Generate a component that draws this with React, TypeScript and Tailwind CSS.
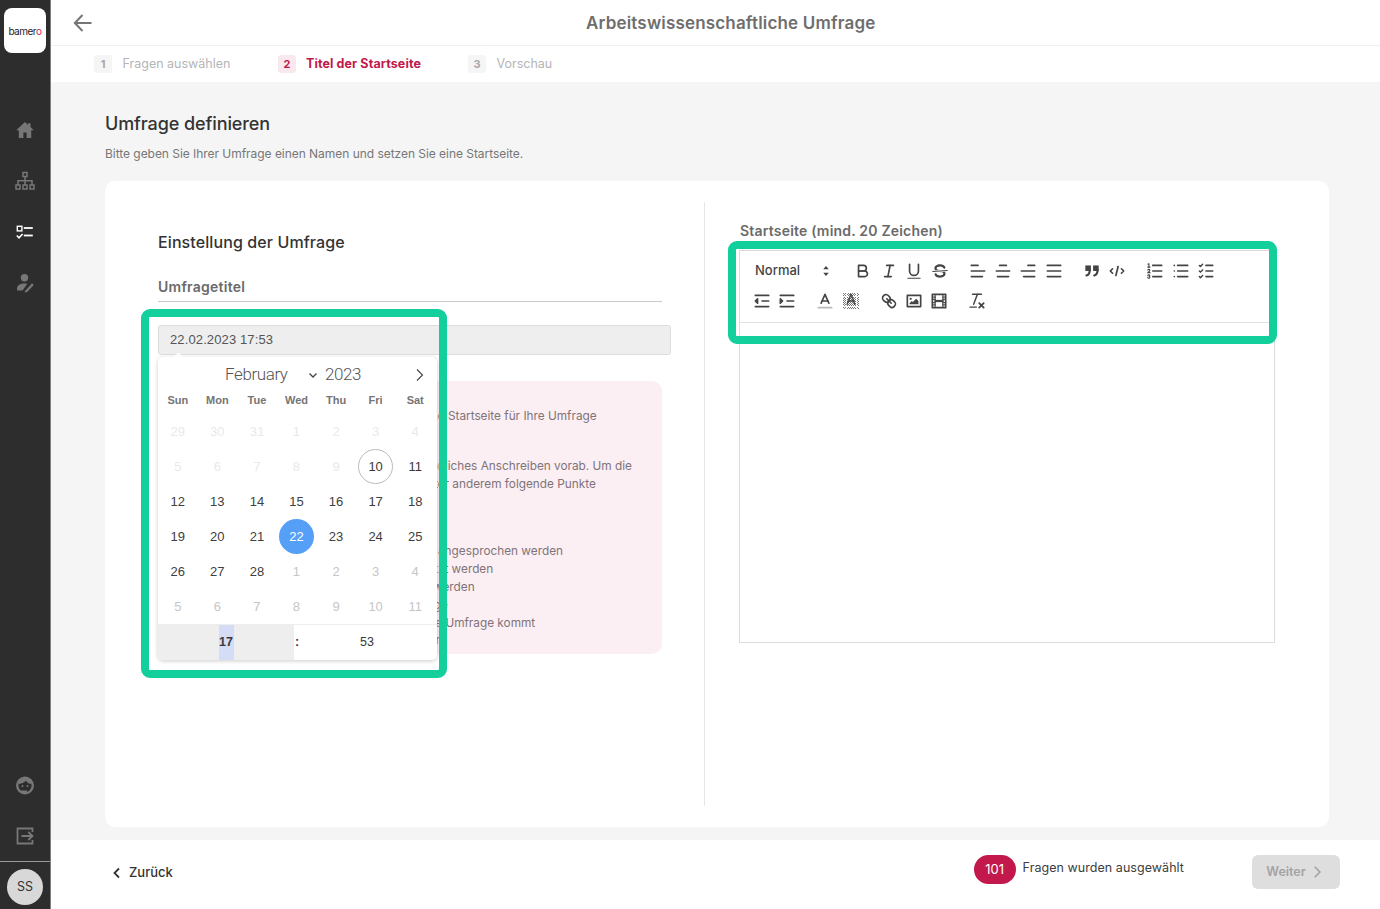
import React from "react";

const S = "#444";
const st = { stroke: S, strokeWidth: 1.5, fill: "none", strokeLinecap: "round" as const, strokeLinejoin: "round" as const };
const th = { ...st, strokeWidth: 1 };
const f = { fill: S };

const Q = ({ children }: { children: React.ReactNode }) => (
  <span className="flex h-6 w-[25.4px] items-center justify-center">
    <svg viewBox="0 0 18 18" className="h-5 w-5 shrink-0">{children}</svg>
  </span>
);
const L = ({ x1, x2, y }: { x1: number; x2: number; y: number }) => <line x1={x1} x2={x2} y1={y} y2={y} {...st} />;

const hatch = [] as React.ReactNode[];
for (let y = 2; y < 16; y++) for (let x = 2; x < 16; x++) if ((x + y) % 2 === 0) hatch.push(<rect key={x + "-" + y} x={x} y={y} width="0.9" height="0.9" fill="#777" shapeRendering="crispEdges" />);

function Toolbar() {
  return (
    <div className="flex flex-wrap gap-x-[12.7px] gap-y-[6px] border-b border-[#e2e2e2] pl-[9px] pr-2 pt-[8px] pb-[9px]">
      <div className="flex h-6 w-[89px] items-center justify-between pl-[6px] pr-[2px] text-[13px] font-medium text-[#444]">
        <span>Normal</span>
        <svg viewBox="0 0 18 18" className="h-5 w-5"><polygon points="6.5 7.5 9 4.5 11.5 7.5" fill={S} /><polygon points="6.5 10.5 9 13.5 11.5 10.5" fill={S} /></svg>
      </div>
      <div className="flex">
        <Q><path d="M5,4H9.5A2.5,2.5,0,0,1,12,6.5v0A2.5,2.5,0,0,1,9.5,9H5A0,0,0,0,1,5,9V4A0,0,0,0,1,5,4Z" {...st} /><path d="M5,9h5.5A2.5,2.5,0,0,1,13,11.5v0A2.5,2.5,0,0,1,10.5,14H5a0,0,0,0,1,0,0V9A0,0,0,0,1,5,9Z" {...st} /></Q>
        <Q><L x1={7} x2={13} y={4} /><L x1={5} x2={11} y={14} /><line x1="8" x2="10" y1="14" y2="4" {...st} /></Q>
        <Q><path d="M5,3V9a4.012,4.012,0,0,0,4,4H9a4.012,4.012,0,0,0,4-4V3" {...st} /><rect height="1" rx=".5" ry=".5" width="12" x="3" y="15" {...f} /></Q>
        <Q><line x1="15.5" x2="2.5" y1="8.5" y2="9.5" {...th} /><path d="M9.007,8C6.542,7.791,6,7.519,6,6.5,6,5.792,7.283,5,9,5c1.571,0,2.765.679,2.969,1.309a1,1,0,0,0,1.9-.617C13.356,4.106,11.354,3,9,3,6.2,3,4,4.538,4,6.5a3.2,3.2,0,0,0,.5,1.843Z" {...f} /><path d="M8.984,10C11.457,10.208,12,10.479,12,11.5c0,.708-1.283,1.5-3,1.5-1.571,0-2.765-.679-2.969-1.309a1,1,0,1,0-1.9.617C4.644,13.894,6.646,15,9,15c2.8,0,5-1.538,5-3.5a3.2,3.2,0,0,0-.5-1.843Z" {...f} /></Q>
      </div>
      <div className="flex">
        <Q><L x1={3} x2={15} y={9} /><L x1={3} x2={13} y={14} /><L x1={3} x2={9} y={4} /></Q>
        <Q><L x1={15} x2={3} y={9} /><L x1={14} x2={4} y={14} /><L x1={12} x2={6} y={4} /></Q>
        <Q><L x1={15} x2={3} y={9} /><L x1={15} x2={5} y={14} /><L x1={15} x2={9} y={4} /></Q>
        <Q><L x1={15} x2={3} y={9} /><L x1={15} x2={3} y={14} /><L x1={15} x2={3} y={4} /></Q>
      </div>
      <div className="flex">
        <Q><rect height="3" width="3" x="4" y="5" fill={S} stroke={S} strokeWidth="2" /><rect height="3" width="3" x="11" y="5" fill={S} stroke={S} strokeWidth="2" /><path d="M7,8c0,4.031-3,5-3,5" {...st} strokeWidth={2} /><path d="M14,8c0,4.031-3,5-3,5" {...st} strokeWidth={2} /></Q>
        <Q><polyline points="5 7 3 9 5 11" {...st} /><polyline points="13 7 15 9 13 11" {...st} /><line x1="10" x2="8" y1="5" y2="13" {...st} /></Q>
      </div>
      <div className="flex">
        <Q><L x1={7} x2={15} y={4} /><L x1={7} x2={15} y={9} /><L x1={7} x2={15} y={14} /><line x1="2.5" x2="4.5" y1="5.5" y2="5.5" {...th} /><path d="M3.5,6A0.5,0.5,0,0,1,3,5.5V3.085l-0.276.138A0.5,0.5,0,0,1,2.053,3c-0.124-.247-0.023-0.324.224-0.447l1-.5A0.5,0.5,0,0,1,4,2.5v3A0.5,0.5,0,0,1,3.5,6Z" {...f} /><path d="M4.5,10.5h-2c0-.234,1.85-1.076,1.85-2.234A0.959,0.959,0,0,0,2.5,8.156" {...th} /><path d="M2.5,14.846a0.959,0.959,0,0,0,1.85-.109A0.7,0.7,0,0,0,3.75,14a0.688,0.688,0,0,0,.6-0.736,0.959,0.959,0,0,0-1.85-.109" {...th} /></Q>
        <Q><L x1={6} x2={15} y={4} /><L x1={6} x2={15} y={9} /><L x1={6} x2={15} y={14} /><L x1={3} x2={3} y={4} /><L x1={3} x2={3} y={9} /><L x1={3} x2={3} y={14} /></Q>
        <Q><L x1={9} x2={15} y={4} /><polyline points="3 4 4 5 6 3" {...th} strokeWidth={1.3} /><L x1={9} x2={15} y={14} /><polyline points="3 14 4 15 6 13" {...th} strokeWidth={1.3} /><L x1={9} x2={15} y={9} /><polyline points="3 9 4 10 6 8" {...th} strokeWidth={1.3} /></Q>
      </div>
      <div className="flex">
        <Q><L x1={3} x2={15} y={14} /><L x1={3} x2={15} y={4} /><L x1={9} x2={15} y={9} /><polyline points="5 7 5 11 3 9 5 7" {...st} fill={S} /></Q>
        <Q><L x1={3} x2={15} y={14} /><L x1={3} x2={15} y={4} /><L x1={9} x2={15} y={9} /><polyline points="3 7 3 11 5 9 3 7" {...st} fill={S} /></Q>
      </div>
      <div className="flex">
        <Q><line x1="3" x2="15" y1="15" y2="15" {...st} stroke="#bbb" /><polyline points="5.5 11 9 3 12.5 11" {...st} /><line x1="11.63" x2="6.38" y1="9" y2="9" {...st} /></Q>
        <Q>{hatch}<polyline points="5.5 12 9 3 12.5 12" {...th} strokeWidth={1.3} /><line x1="11.63" x2="6.38" y1="9" y2="9" {...th} strokeWidth={1.3} /></Q>
      </div>
      <div className="flex">
        <Q><line x1="7" x2="11" y1="7" y2="11" {...st} /><path d="M8.9,4.577a3.476,3.476,0,0,1,.36,4.679A3.476,3.476,0,0,1,4.577,8.9C3.185,7.5,2.035,6.4,4.217,4.217S7.5,3.185,8.9,4.577Z" {...st} /><path d="M13.423,9.1a3.476,3.476,0,0,0-4.679-.36,3.476,3.476,0,0,0,.36,4.679c1.392,1.392,2.5,2.542,4.679.36S14.815,10.5,13.423,9.1Z" {...st} /></Q>
        <Q><rect height="10" width="12" x="3" y="4" {...st} /><circle cx="6" cy="7" r="1" {...f} /><polyline points="5 12 5 11 7 9 8 10 11 7 13 9 13 12 5 12" {...f} /></Q>
        <Q><rect height="12" width="12" x="3" y="3" {...st} /><rect height="12" width="1" x="5" y="3" {...f} /><rect height="12" width="1" x="12" y="3" {...f} /><rect height="2" width="8" x="5" y="8" {...f} /><rect height="1" width="3" x="3" y="5" {...f} /><rect height="1" width="3" x="3" y="7" {...f} /><rect height="1" width="3" x="3" y="10" {...f} /><rect height="1" width="3" x="3" y="12" {...f} /><rect height="1" width="3" x="12" y="5" {...f} /><rect height="1" width="3" x="12" y="7" {...f} /><rect height="1" width="3" x="12" y="10" {...f} /><rect height="1" width="3" x="12" y="12" {...f} /></Q>
      </div>
      <div className="flex">
        <Q><line x1="5" x2="13" y1="3" y2="3" {...th} strokeWidth={1.3} /><line x1="6" x2="9.35" y1="12" y2="3" {...th} strokeWidth={1.3} /><line x1="11" x2="15" y1="11" y2="15" {...st} strokeWidth={1.6} /><line x1="15" x2="11" y1="11" y2="15" {...st} strokeWidth={1.6} /><rect height="1" rx=".5" ry=".5" width="7" x="2" y="14" {...f} /></Q>
      </div>
    </div>
  );
}

const rows: [string, number][][] = [
  [["29", 0], ["30", 0], ["31", 0], ["1", 0], ["2", 0], ["3", 0], ["4", 0]],
  [["5", 0], ["6", 0], ["7", 0], ["8", 0], ["9", 0], ["10", 3], ["11", 4]],
  [["12", 1], ["13", 1], ["14", 1], ["15", 1], ["16", 1], ["17", 1], ["18", 1]],
  [["19", 1], ["20", 1], ["21", 1], ["22", 2], ["23", 1], ["24", 1], ["25", 1]],
  [["26", 1], ["27", 1], ["28", 1], ["1", 5], ["2", 5], ["3", 5], ["4", 5]],
  [["5", 5], ["6", 5], ["7", 5], ["8", 5], ["9", 5], ["10", 5], ["11", 5]],
];

function dayClass(k: number) {
  if (k === 0) return "text-[#e9e9e9]";
  if (k === 1) return "text-[#404040]";
  if (k === 2) return "rounded-full bg-[#569ff7] text-white";
  if (k === 3) return "rounded-full border border-[#bbbbbb] text-[#393939]";
  if (k === 4) return "text-[#393939]";
  return "text-[#c6c6c6]";
}

function Calendar() {
  return (
    <div className="absolute left-0 top-[32px] z-10 flex h-[303px] w-[279px] flex-col rounded-[5px] bg-white font-['Liberation_Sans',sans-serif] shadow-[0_1px_4px_rgba(0,0,0,0.2)]">
      <div className="absolute -top-[3px] left-[17px] h-[7px] w-[7px] rotate-45 bg-white" />
      <div className="relative flex h-[34px] shrink-0 items-center pt-[1px] text-[17px] font-light tracking-[-0.4px] text-[#555]">
        <span className="ml-[67px] w-[62px] font-['Roboto',sans-serif] font-light">February</span>
        <svg viewBox="0 0 12 12" className="ml-[20px] h-3 w-3"><polyline points="2.5 4.5 6 8 9.5 4.5" fill="none" stroke="#444" strokeWidth="1.3" /></svg>
        <span className="ml-[6px] font-['Roboto',sans-serif] font-light">2023</span>
        <svg viewBox="0 0 14 14" className="ml-[52px] h-[14px] w-[14px]"><polyline points="4 1.5 9.5 7 4 12.5" fill="none" stroke="#444" strokeWidth="1.1" /></svg>
      </div>
      <div className="grid h-[22.5px] shrink-0 grid-cols-7 pr-[2px] text-center text-[11px] font-bold leading-[18px] text-[#757575]">
        {["Sun", "Mon", "Tue", "Wed", "Thu", "Fri", "Sat"].map((d) => <span key={d}>{d}</span>)}
      </div>
      <div className="grid h-[210px] shrink-0 grid-cols-7 grid-rows-6 pr-[2px] text-[13px]">
        {rows.flat().map(([d, k], i) => (
          <div key={i} className="flex items-center justify-center">
            <span className={"flex h-[35px] w-[35px] items-center justify-center pt-[1px] " + dayClass(k)}>{d}</span>
          </div>
        ))}
      </div>
      <div className="flex min-h-0 flex-1 items-center overflow-hidden rounded-b-[5px] border-t border-[#eeeeee] text-[12.5px] text-[#393939]">
        <div className="flex h-full w-[136px] justify-center bg-[#eeeeee]">
          <span className="flex h-full w-[15px] items-center justify-center bg-[#d5dcf6] pt-[1px] font-bold">17</span>
        </div>
        <span className="w-[6px] pt-[1px] text-center font-bold">:</span>
        <span className="flex-1 pr-[3px] pt-[1px] text-center">53</span>
      </div>
    </div>
  );
}

function Step({ n, label, active, className }: { n: string; label: string; active?: boolean; className: string }) {
  return (
    <div className={"flex items-center text-[12.5px] " + className}>
      <span className={"flex h-[18px] w-[18px] items-center justify-center rounded-[3px] text-[11px] font-bold " + (active ? "bg-[#f9e8ee] text-[#c2184b]" : "bg-[#f5f5f5] text-[#a8a8a8]")}>{n}</span>
      <span className={active ? "ml-[10px] font-bold tracking-[0.1px] text-[#c2184b]" : "ml-[10.5px] text-[#b5b5b5]"}>{label}</span>
    </div>
  );
}

const Side = ({ className, children }: { className?: string; children: React.ReactNode }) => (
  <svg viewBox="0 0 20 20" className={"h-5 w-5 shrink-0 " + (className ?? "")}>{children}</svg>
);

function Sidebar() {
  const g = "#777777";
  return (
    <aside className="flex h-full w-[51px] shrink-0 flex-col items-center border-r border-[#808080] bg-[#2d2d2d]">
      <div className="mt-2 flex h-[45px] w-[42px] items-center justify-center rounded-[8px] bg-white pt-[2px] text-[10px] tracking-[-0.5px] text-[#222]">
        bamer<span className="text-[#d81b60]">o</span>
      </div>
      <Side className="mt-[67px]"><path d="M10 2 1.2 10.2h2.6V18h4.6v-5.5h3.2V18h4.6v-7.8h2.6L15.5 7.1V3.2h-2.4v1.7z" fill={g} /></Side>
      <Side className="mt-[31px]">
        <g fill="none" stroke={g} strokeWidth="1.5">
          <rect x="8" y="1.5" width="4" height="4" /><rect x="1" y="14" width="4" height="4" /><rect x="8" y="14" width="4" height="4" /><rect x="15" y="14" width="4" height="4" />
          <path d="M10 5.5V14M3 14V9.7h14V14" />
        </g>
      </Side>
      <Side className="mt-[32px]">
        <rect x="2.3" y="3.3" width="4.6" height="4.6" fill="none" stroke="#fff" strokeWidth="1.4" />
        <path d="M8.8 5h9" stroke="#fff" strokeWidth="1.8" />
        <path d="M8.8 12.5h9" stroke="#fff" strokeWidth="1.8" />
        <path d="M1.8 12.5l2.2 2.3 3.6-3.8" fill="none" stroke="#fff" strokeWidth="1.6" />
      </Side>
      <Side className="mt-[30px]">
        <circle cx="9.5" cy="4.8" r="3.7" fill={g} />
        <path d="M2 17.5v-2.3c0-3 3.4-4.7 7.5-4.7 1 0 1.9.1 2.8.3L7.5 17.5z" fill={g} />
        <path d="M10.2 17.7 17 10.3l1.8 1.6-6.7 7.1-2.5.5z" fill={g} />
      </Side>
      <Side className="mt-auto">
        <circle cx="10" cy="10.5" r="7.8" fill="none" stroke={g} strokeWidth="2.4" />
        <path d="M3.5 9C6 9 9.5 7.5 11 5.5c1 2 3 3.5 5.5 3.5V4.5L10 2.5 4 4.5z" fill={g} />
        <circle cx="7.5" cy="11" r="1" fill={g} /><circle cx="12.5" cy="11" r="1" fill={g} />
        <path d="M6 16.5h6" stroke={g} strokeWidth="2" />
      </Side>
      <Side className="mt-[31px]">
        <path d="M17.5 6V2.5h-15v15h15V14" fill="none" stroke={g} strokeWidth="1.8" />
        <path d="M6.5 10H17M13.3 6l4.2 4-4.2 4" fill="none" stroke={g} strokeWidth="1.8" />
      </Side>
      <div className="mt-[15px] flex h-[48px] w-full shrink-0 justify-center border-t border-[#9a9a9a] pt-[7px]">
        <span className="flex h-9 w-9 items-center justify-center rounded-full bg-[#d8d8d8] text-[12.5px] text-[#333]">SS</span>
      </div>
    </aside>
  );
}

export default function App() {
  return (
    <div className="relative flex h-screen w-full overflow-hidden bg-white font-['Inter',sans-serif]">
      <Sidebar />
      <div className="flex min-w-0 flex-1 flex-col">
        <header className="relative flex h-[46px] shrink-0 items-center border-b border-[#f0f0f0] pl-[22px]">
          <svg viewBox="0 0 20 20" className="h-5 w-5 shrink-0">
            <path d="M18.5 10H2M9.5 2 1.8 10l7.7 8" fill="none" stroke="#757575" strokeWidth="2" />
          </svg>
          <h1 className="ml-[493px] pt-[2px] text-[17px] font-semibold tracking-[0.17px] text-[#6e6e6e]">Arbeitswissenschaftliche Umfrage</h1>
        </header>
        <nav className="flex h-[36px] shrink-0 items-center pl-[43px]">
          <Step n="1" label="Fragen auswählen" className="w-[184px]" />
          <Step n="2" label="Titel der Startseite" active className="w-[190px]" />
          <Step n="3" label="Vorschau" className="" />
        </nav>
        <main className="flex min-h-0 flex-1 flex-col bg-[#f5f5f5] pb-[13px] pl-[54px] pr-[51px]">
          <h2 className="mt-[31px] text-[18px] font-medium leading-[22px] tracking-[-0.1px] text-[#333]">Umfrage definieren</h2>
          <p className="mt-[10px] text-[12px] leading-[18px] tracking-[-0.04px] text-[#777]">Bitte geben Sie Ihrer Umfrage einen Namen und setzen Sie eine Startseite.</p>
          <section className="mt-[18px] flex min-h-0 flex-1 rounded-[10px] bg-white py-[21px]">
            <div className="w-[599px] shrink-0 pl-[53px] pr-[42px] pt-[28px]">
              <h3 className="text-[16px] font-medium leading-6 tracking-[0.1px] text-[#333]">Einstellung der Umfrage</h3>
              <div className="mt-[23px] border-b border-[#c9c9c9] pb-1 text-[14px] font-semibold leading-5 tracking-[0.25px] text-[#6a6a6a]">Umfragetitel</div>
              <div className="relative mt-[23px] -mr-[9px]">
                <div className="flex h-[30px] items-center rounded-[3px] border border-[#dddddd] bg-[#eeeeee] pl-[11px] font-['Liberation_Sans',sans-serif] text-[13px] tracking-[0.12px] text-[#555]">22.02.2023 17:53</div>
                <Calendar />
              </div>
              <div className="mt-[26px] h-[273px] overflow-hidden rounded-[10px] bg-[#fbeff3] pl-[16px] pt-[27px] text-[11.8px] leading-[17.8px] text-[#7f7379]">
                <p className="ml-[247px]">eine Startseite für Ihre Umfrage</p>
                <p className="ml-[232px] mt-[32px]">persönliches Anschreiben vorab. Um die</p>
                <p className="ml-[246px]">unter anderem folgende Punkte</p>
                <p className="ml-[264px] mt-[50px]">angesprochen werden</p>
                <p className="ml-[219px]">geschützt werden</p>
                <p className="ml-[259px]">werden</p>
                <p className="ml-[242px]">Frage</p>
                <p className="ml-[238px]">diese Umfrage kommt</p>
                <p className="ml-[255px]">an</p>
              </div>
            </div>
            <div className="min-w-0 flex-1 border-l border-[#e6e6e6] pl-[34px] pr-[54px] pt-[19px]">
              <div className="ml-px text-[14px] font-semibold leading-5 tracking-[0.2px] text-[#6a6a6a]">Startseite (mind. 20 Zeichen)</div>
              <div className="mt-[9px] flex h-[393px] flex-col border border-[#dcdcdc]">
                <Toolbar />
              </div>
            </div>
          </section>
        </main>
        <footer className="flex h-[69px] shrink-0 items-start pl-[60px] pr-[40px] pt-[15px]">
          <div className="mt-[8px] flex items-center text-[13px] font-medium text-[#333]">
            <svg viewBox="0 0 12 12" className="h-3 w-3"><polyline points="8 1.5 3.5 6 8 10.5" fill="none" stroke="#333" strokeWidth="1.8" /></svg>
            <span className="ml-[6px]">Zurück</span>
          </div>
          <span className="ml-auto flex h-[29px] w-[42px] items-center justify-center rounded-full bg-[#c2184b] text-[13px] text-white">101</span>
          <span className="ml-[7px] mt-[3px] text-[12.5px] leading-5 tracking-[0.05px] text-[#3d3d3d]">Fragen wurden ausgewählt</span>
          <span className="ml-[68px] flex h-[34px] w-[88px] items-center justify-center rounded-[6px] bg-[#dedede] pr-[2px] text-[12.5px] font-semibold text-[#a3a3a3]">
            Weiter
            <svg viewBox="0 0 12 12" className="ml-[4px] h-[14px] w-[14px]"><polyline points="4 1.5 8.5 6 4 10.5" fill="none" stroke="#a3a3a3" strokeWidth="1.4" /></svg>
          </span>
        </footer>
      </div>
      <div className="pointer-events-none absolute left-[141px] top-[309px] z-20 h-[369px] w-[306px] rounded-[9px] border-[8px] border-[#13cf9b]" />
      <div className="pointer-events-none absolute left-[728px] top-[241px] z-20 h-[103px] w-[549px] rounded-[9px] border-[8px] border-[#13cf9b]" />
    </div>
  );
}
